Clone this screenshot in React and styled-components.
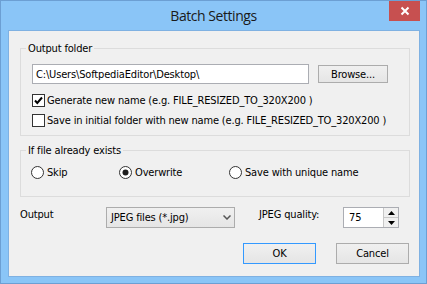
import React from 'react';
import styled, { createGlobalStyle } from 'styled-components';

const Global = createGlobalStyle`
  html, body { margin: 0; padding: 0; background: #fff; }
  body { width: 427px; height: 284px; overflow: hidden; }
  * { box-sizing: border-box; }
`;

const Window = styled.div`
  width: 427px;
  height: 284px;
  background: #8ac5f7;
  border: 1px solid #6c9fd3;
  display: flex;
  flex-direction: column;
  font-family: "DejaVu Sans Condensed", Tahoma, "Liberation Sans", sans-serif;
  font-size: 11px;
  letter-spacing: -0.16px;
  color: #000;
`;

const TitleBar = styled.div`
  height: 29px;
  flex: none;
  display: grid;
  grid-template-columns: 1fr auto 1fr;
  align-items: start;
`;

const Title = styled.div`
  grid-column: 2;
  font-family: "Open Sans", "Noto Sans", sans-serif;
  font-size: 14px;
  letter-spacing: -0.45px;
  line-height: 20px;
  padding-top: 5px;
  color: #1a1a1a;
  white-space: nowrap;
`;

const CloseButton = styled.div`
  grid-column: 3;
  justify-self: end;
  width: 31px;
  height: 20px;
  margin-right: 6px;
  background: #c75050;
  display: flex;
  align-items: center;
  justify-content: center;
`;

const Client = styled.div`
  flex: 1;
  margin: 0 6px 6px 7px;
  background: #f0f0f0;
  border: 1px solid #7fb1e2;
  padding: 17px 9px 0 11px;
  display: flex;
  flex-direction: column;
`;

const Group = styled.div`
  position: relative;
  border: 1px solid #dcdcdc;
  height: ${p => p.$h}px;
  margin-top: ${p => p.$mt || 0}px;
  padding: ${p => p.$pad};
  display: flex;
  flex-direction: column;
`;

const GroupTitle = styled.span`
  position: absolute;
  top: -7px;
  left: 5px;
  padding: 0 2px;
  background: #f0f0f0;
  line-height: 13px;
  white-space: nowrap;
`;

const Row = styled.div`
  display: flex;
  align-items: center;
  height: ${p => p.$h || 20}px;
  margin-top: ${p => p.$mt || 0}px;
`;

const TextInput = styled.div`
  width: 277px;
  height: 20px;
  background: #fff;
  border: 1px solid #abadb3;
  padding: 0 3px;
  display: flex;
  align-items: center;
  white-space: nowrap;
`;

const Button = styled.div`
  width: ${p => p.$w}px;
  height: ${p => p.$h}px;
  margin-left: ${p => p.$ml || 0}px;
  border: 1px solid ${p => (p.$default ? '#3399ff' : '#acacac')};
  background: linear-gradient(#f0f0f0, #e5e5e5);
  display: flex;
  align-items: center;
  justify-content: center;
  white-space: nowrap;
`;

const Label = styled.span`
  white-space: nowrap;
  margin-left: ${p => p.$ml || 0}px;
`;

const CheckBox = styled.span`
  width: 13px;
  height: 13px;
  flex: none;
  border: 1px solid #333;
  background: #fff;
  display: flex;
  align-items: center;
  justify-content: center;
  margin-right: 2px;
`;

const RadioGrid = styled.div`
  display: grid;
  grid-template-columns: 88px 110px auto;
  align-items: center;
  height: 20px;
  padding-left: 10px;
`;

const RadioItem = styled.div`
  display: flex;
  align-items: center;
  gap: 3px;
`;

const BottomRow = styled.div`
  display: flex;
  align-items: flex-start;
  height: 21px;
  margin-top: 10px;
`;

const FieldLabel = styled.span`
  width: ${p => p.$w}px;
  margin-left: ${p => p.$ml || 0}px;
  flex: none;
  line-height: 13px;
  padding-top: 1px;
  white-space: nowrap;
`;

const Select = styled.div`
  width: 129px;
  height: 21px;
  flex: none;
  border: 1px solid #acacac;
  background: linear-gradient(#f0f0f0, #e5e5e5);
  display: flex;
  align-items: center;
  justify-content: space-between;
  padding: 0 3px 0 4px;
  white-space: nowrap;
`;

const Spin = styled.div`
  width: 56px;
  height: 21px;
  flex: none;
  border: 1px solid #abadb3;
  background: #fff;
  display: flex;
`;

const SpinValue = styled.div`
  flex: 1;
  display: flex;
  align-items: center;
  padding-left: 5px;
`;

const SpinButtons = styled.div`
  width: 15px;
  border-left: 1px solid #c8c8c8;
  display: flex;
  flex-direction: column;
`;

const SpinButton = styled.div`
  flex: 1;
  display: flex;
  align-items: center;
  justify-content: center;
  background: #f0f0f0;
  & + & { border-top: 1px solid #c8c8c8; }
`;

const ButtonRow = styled.div`
  display: flex;
  justify-content: flex-end;
  margin-top: 15px;
  padding-right: 1px;
`;

const Check = () => (
  <svg width="11" height="11" viewBox="0 0 11 11">
    <path d="M2 5.5 L4.3 8 L9 2.5" fill="none" stroke="#000" strokeWidth="2" />
  </svg>
);

const Radio = ({ on }) => (
  <svg width="13" height="13" viewBox="0 0 13 13">
    <circle cx="6.5" cy="6.5" r="6" fill="#fff" stroke="#333" strokeWidth="1" />
    {on && <circle cx="6.5" cy="6.5" r="3" fill="#1e1e1e" />}
  </svg>
);

const Chevron = () => (
  <svg width="8" height="5" viewBox="0 0 8 5">
    <path d="M0.5 0.5 L4 4 L7.5 0.5" fill="none" stroke="#555" strokeWidth="1.5" />
  </svg>
);

const Tri = ({ up }) => (
  <svg width="7" height="4" viewBox="0 0 7 4">
    <path d={up ? 'M0 4 L3.5 0 L7 4 Z' : 'M0 0 L3.5 4 L7 0 Z'} fill="#000" />
  </svg>
);

export default function App() {
  return (
    <>
      <Global />
      <Window>
        <TitleBar>
          <Title>Batch Settings</Title>
          <CloseButton>
            <svg width="10" height="10" viewBox="0 0 10 10">
              <path d="M1.5 1.5 L8.5 8.5 M8.5 1.5 L1.5 8.5" stroke="#fff" strokeWidth="2" />
            </svg>
          </CloseButton>
        </TitleBar>
        <Client>
          <Group $h={88} $pad="15px 0 0 11px">
            <GroupTitle>Output folder</GroupTitle>
            <Row>
              <TextInput>C:\Users\SoftpediaEditor\Desktop\</TextInput>
              <Button $w={70} $h={18} $ml={9}>Browse...</Button>
            </Row>
            <Row $mt={6}>
              <CheckBox><Check /></CheckBox>
              <Label>Generate new name (e.g. FILE_RESIZED_TO_320X200 )</Label>
            </Row>
            <Row>
              <CheckBox />
              <Label>Save in initial folder with new name (e.g. FILE_RESIZED_TO_320X200 )</Label>
            </Row>
          </Group>
          <Group $h={47} $mt={14} $pad="11px 0 0 0">
            <GroupTitle>If file already exists</GroupTitle>
            <RadioGrid>
              <RadioItem><Radio /><Label>Skip</Label></RadioItem>
              <RadioItem><Radio on /><Label>Overwrite</Label></RadioItem>
              <RadioItem><Radio /><Label>Save with unique name</Label></RadioItem>
            </RadioGrid>
          </Group>
          <BottomRow>
            <FieldLabel $w={86}>Output</FieldLabel>
            <Select>
              <span>JPEG files (*.jpg)</span>
              <Chevron />
            </Select>
            <FieldLabel $w={84} $ml={24}>JPEG quality:</FieldLabel>
            <Spin>
              <SpinValue>75</SpinValue>
              <SpinButtons>
                <SpinButton><Tri up /></SpinButton>
                <SpinButton><Tri /></SpinButton>
              </SpinButtons>
            </Spin>
          </BottomRow>
          <ButtonRow>
            <Button $w={73} $h={21} $default>OK</Button>
            <Button $w={73} $h={21} $ml={20}>Cancel</Button>
          </ButtonRow>
        </Client>
      </Window>
    </>
  );
}
